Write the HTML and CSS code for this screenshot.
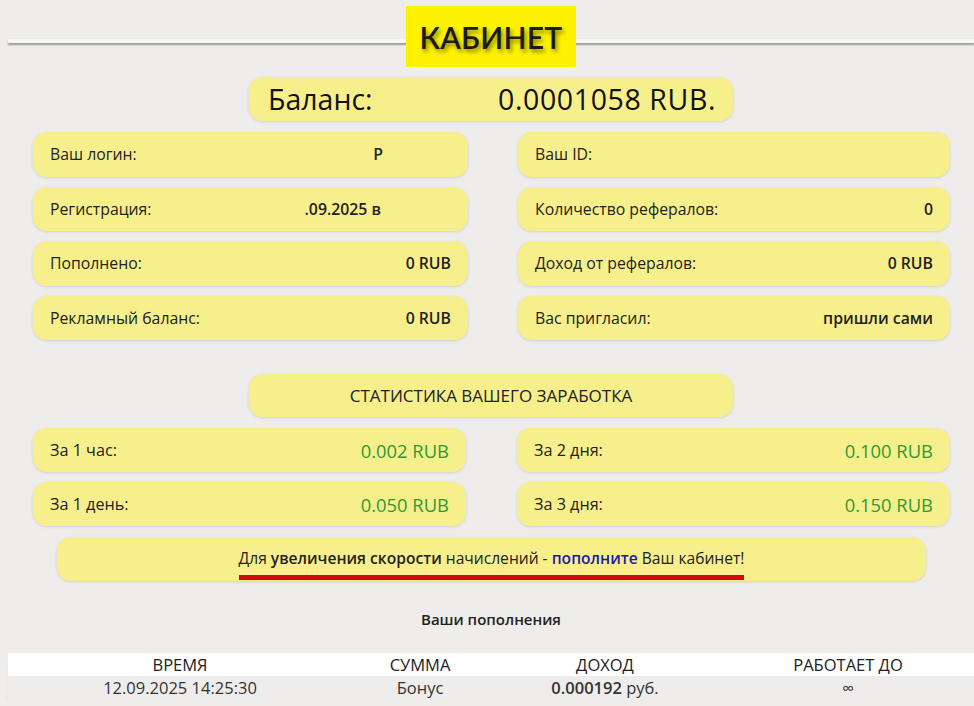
FILE: index.html
```html
<!DOCTYPE html>
<html lang="ru">
<head>
<meta charset="utf-8">
<title>Кабинет</title>
<link rel="stylesheet" href="styles.css">
</head>
<body>
<div class="page">
  <header class="head">
    <div class="title">КАБИНЕТ</div>
  </header>

  <div class="balance">
    <span class="balance-label">Баланс:</span>
    <span class="balance-value">0.0001058 RUB.</span>
  </div>

  <div class="grid info">
    <div class="card"><span>Ваш логин:</span><span class="val hide-login">P</span></div>
    <div class="card"><span>Ваш ID:</span><span class="val"></span></div>
    <div class="card"><span>Регистрация:</span><span class="val hide-reg">.09.2025 в</span></div>
    <div class="card"><span>Количество рефералов:</span><span class="val">0</span></div>
    <div class="card"><span>Пополнено:</span><span class="val">0 RUB</span></div>
    <div class="card"><span>Доход от рефералов:</span><span class="val">0 RUB</span></div>
    <div class="card"><span>Рекламный баланс:</span><span class="val">0 RUB</span></div>
    <div class="card"><span>Вас пригласил:</span><span class="val">пришли сами</span></div>
  </div>

  <div class="stats-head">СТАТИСТИКА ВАШЕГО ЗАРАБОТКА</div>

  <div class="grid stats">
    <div class="card"><span>За 1 час:</span><span class="green">0.002 RUB</span></div>
    <div class="card"><span>За 2 дня:</span><span class="green">0.100 RUB</span></div>
    <div class="card"><span>За 1 день:</span><span class="green">0.050 RUB</span></div>
    <div class="card"><span>За 3 дня:</span><span class="green">0.150 RUB</span></div>
  </div>

  <div class="notice">
    <span class="notice-text">Для <b>увеличения скорости</b> начислений - <a class="link" href="#">пополните</a> Ваш кабинет!</span>
  </div>

  <div class="deposits-title">Ваши пополнения</div>

  <table class="deposits">
    <thead>
      <tr><th class="c1">ВРЕМЯ</th><th class="c2">СУММА</th><th class="c3">ДОХОД</th><th class="c4">РАБОТАЕТ ДО</th></tr>
    </thead>
    <tbody>
      <tr><td>12.09.2025 14:25:30</td><td>Бонус</td><td><b>0.000192</b> руб.</td><td>∞</td></tr>
    </tbody>
  </table>
</div>
</body>
</html>
```

FILE: styles.css
```css
* { box-sizing: border-box; }
html, body { margin: 0; padding: 0; }
body {
  background: #eeedeb;
  font-family: "Open Sans", "Lato", sans-serif;
  color: #222;
  overflow: hidden;
}
.page {
  margin-left: 8px;
  width: 966px;
}
.head {
  position: relative;
  height: 67px;
  padding-top: 6px;
  display: flex;
  justify-content: center;
}
.head::before {
  content: "";
  position: absolute;
  left: 0;
  right: 0;
  top: 39px;
  height: 4px;
  background: #f7f7f7;
  box-shadow: 0 2px 2px rgba(0,0,0,0.35);
}
.title {
  position: relative;
  width: 170px;
  height: 61px;
  background: #fff200;
  display: flex;
  align-items: center;
  justify-content: center;
  font-family: "Lato", sans-serif;
  font-size: 30px;
  font-weight: 600;
  color: #1a1a1a;
  text-shadow: 2px 3px 4px rgba(0,0,0,0.45);
  letter-spacing: 0.3px;
}
.balance {
  width: 484px;
  height: 44px;
  margin: 10px auto 0;
  background: #f7ef8b;
  border-radius: 14px;
  box-shadow: 0 1px 3px rgba(0,0,0,0.12);
  display: flex;
  align-items: center;
  justify-content: space-between;
  padding: 0 17px 0 19px;
  font-size: 28.5px;
  color: #111;
}
.balance-value { letter-spacing: 0.6px; }
.grid {
  display: grid;
  grid-template-columns: 435px 432px;
  column-gap: 50px;
  row-gap: 10px;
  padding-left: 25px;
}
.info { margin-top: 11px; }
.card {
  height: 44.5px;
  background: #f7ef8b;
  border-radius: 14px;
  box-shadow: 0 1px 3px rgba(0,0,0,0.12);
  display: flex;
  align-items: center;
  justify-content: space-between;
  padding: 0 17px 0 17px;
  font-size: 15.8px;
  color: #222;
}
.val { font-weight: 600; }
.hide-login { margin-right: 68px; }
.hide-reg { margin-right: 70px; }
.stats-head {
  width: 484px;
  height: 43px;
  margin: 34px auto 0;
  background: #f7ef8b;
  border-radius: 14px;
  box-shadow: 0 1px 3px rgba(0,0,0,0.12);
  display: flex;
  align-items: center;
  justify-content: center;
  font-size: 17px;
  color: #222;
}
.stats { margin-top: 11px; column-gap: 51px; grid-template-columns: 433px 433px; }
.stats .card { height: 44px; font-size: 16.2px; }
.green { color: #2f9a33; font-size: 18.4px; }
.notice {
  width: 869px;
  height: 44px;
  margin: 11px 0 0 49px;
  background: #f7ef8b;
  border-radius: 14px;
  box-shadow: 0 1px 3px rgba(0,0,0,0.12);
  display: flex;
  align-items: flex-start;
  justify-content: center;
  padding-top: 12px;
  font-size: 15.6px;
}
.notice-text {
  display: inline-block;
  border-bottom: 5px solid #d10a0a;
  padding-bottom: 8px;
  line-height: 18px;
}
.notice-text b { font-weight: 600; }
.link { color: #1a1ab0; text-decoration: none; font-weight: 600; }
.deposits-title {
  margin-top: 28px;
  text-align: center;
  font-size: 15px;
  font-weight: 600;
  color: #222;
}
.deposits {
  margin-top: 24px;
  width: 966px;
  border-collapse: collapse;
  table-layout: fixed;
  font-size: 16.5px;
  color: #222;
  box-shadow: 0 6px 6px -4px rgba(0,0,0,0.25);
}
.deposits th {
  background: #fff;
  font-weight: 500;
  height: 23px;
  padding: 0;
  line-height: 23px;
  text-align: center;
}
.deposits td {
  height: 24px;
  padding: 0;
  line-height: 24px;
  text-align: center;
  color: #333;
}
.deposits td b { font-weight: 600; }
.c1 { width: 344px; }
.c2 { width: 136px; }
.c3 { width: 234px; }
.c4 { width: 252px; }
```
